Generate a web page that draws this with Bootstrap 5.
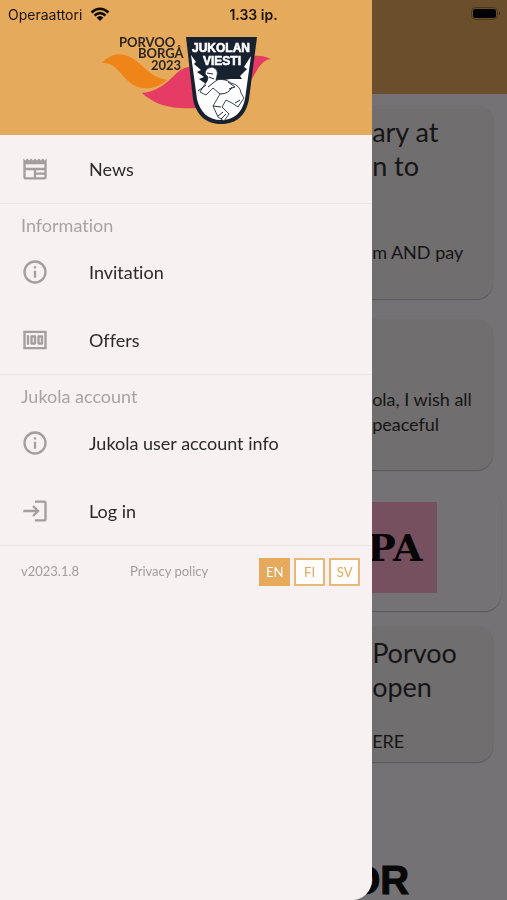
<!DOCTYPE html>
<html lang="en">
<head>
<meta charset="utf-8">
<meta name="viewport" content="width=device-width, initial-scale=1">
<title>Jukola</title>
<link href="https://cdn.jsdelivr.net/npm/bootstrap@5.3.0/dist/css/bootstrap.min.css" rel="stylesheet">
<style>
:root { --drawer: 73.4vw; --brand: #e5aa5b; }
body { font-family: Lato, "Open Sans", sans-serif; font-variant-ligatures: none; background: #747275; color: #161516; overflow: hidden; }
.screen { height: 100vh; overflow: hidden; }
.topbar { height: 94px; background: #6b4f2c; }
.statusbar { height: 28px; font-family: Inter, sans-serif; font-size: 14px; color: #1d1408; }
.clock { left: 50vw; transform: translateX(-50%); font-weight: 600; }
.feed { padding-top: 11px; gap: 20px; }
.post { background: #706e6e; border-radius: 16px; padding: 10px 16px 16px var(--drawer); margin-right: 14px; box-shadow: 0 1px 1px #5a585a; }
.post h2 { font-size: 27px; line-height: 34px; font-weight: 400; margin: 0; white-space: nowrap; }
.post p { font-size: 18px; line-height: 25px; margin: 0; white-space: nowrap; }
.post-tall { height: 194px; padding-bottom: 34px; }
.post-mid { height: 151px; padding-bottom: 33px; }
.post-low { height: 136px; padding-bottom: 8px; }
.ad { border-radius: 16px; height: 121px; margin-right: 6px; padding-left: calc(var(--drawer) - 5px); padding-top: 12px; box-shadow: 0 1px 1px #5a585a; }
.ad-art { width: 70px; height: 91px; background: #76505f; color: #080507; font: bold 38px "DejaVu Serif", serif; }
.ad + .post { margin-top: -5px; }
.sponsor { padding-left: calc(var(--drawer) - 23px); font: bold 40px/40px "Liberation Sans", Arial, sans-serif; -webkit-text-stroke: 1px #080808; color: #080808; }
.drawer.offcanvas { --bs-offcanvas-width: var(--drawer); --bs-offcanvas-bg: #f7f1f1; --bs-offcanvas-border-width: 0; border-bottom-right-radius: 20px; overflow: hidden; transition: none; }
.brandbar { background: var(--brand); height: 135px; }
.logo { width: 170px; height: 94px; }
.menu-item { height: 68px; padding: 0 21px; gap: 40px; font-size: 18px; color: #2b292a; text-decoration: none; }
.menu-item svg { width: 28px; height: 28px; fill: #a39f9f; flex: none; }
.menu-title { height: 34px; padding: 9px 21px 0; font-size: 18px; line-height: 24px; font-weight: 400; color: #a8a4a4; margin: 0; }
.menu-block { border-bottom: 1px solid #ebe6e6; }
.foot { padding: 12px 12px 0 21px; font-size: 13px; color: #a19d9d; }
.foot a { color: inherit; text-decoration: none; }
.lang { width: 31px; height: 28px; padding: 0; border: 2px solid #e8b878; border-radius: 0; background: #fffdfc; color: var(--brand); font-size: 13px; line-height: 20px; }
.lang.active { background: var(--brand); border-color: var(--brand); color: #fff; }
</style>
<script src="https://cdn.jsdelivr.net/npm/bootstrap@5.3.0/dist/js/bootstrap.bundle.min.js"></script>
</head>
<body>
<main class="screen d-flex flex-column">
  <header class="topbar flex-shrink-0 d-flex justify-content-end align-items-start">
    <svg class="mt-1 me-1" width="32" height="18" viewBox="0 0 32 18" role="img" aria-label="Battery">
      <rect x=".5" y="3.5" width="26" height="12" rx="4" fill="none" stroke="#49361e"/>
      <rect x="2" y="5" width="23" height="9" rx="2.500"/>
      <path d="M28 7.500q2 2 0 4z" fill="#35260f"/>
    </svg>
  </header>
  <div class="feed d-flex flex-column flex-grow-1">
    <article class="post post-tall d-flex flex-column justify-content-between">
      <h2>ary at<br>n to</h2>
      <p>m AND pay</p>
    </article>
    <article class="post post-mid d-flex flex-column justify-content-end">
      <p>ola, I wish all<br>peaceful</p>
    </article>
    <section class="ad"><div class="ad-art d-flex align-items-center">PA</div></section>
    <article class="post post-low d-flex flex-column justify-content-between">
      <h2>Porvoo<br>open</h2>
      <p>ERE</p>
    </article>
    <div class="sponsor mt-auto">OR</div>
  </div>
</main>

<aside class="drawer offcanvas offcanvas-start show" data-bs-backdrop="false" data-bs-scroll="true" tabindex="-1" aria-label="Menu">
  <header class="brandbar flex-shrink-0">
    <div class="statusbar d-flex align-items-center gap-1 ps-2">
      <span>Operaattori</span>
      <svg class="ms-1" width="20" height="15" viewBox="0 0 20 15" fill="none" stroke="#100b04" stroke-width="2.600" role="img" aria-label="Wi-Fi">
        <path d="M1.500 5.500Q10-2 18.500 5.500M4.500 8.500Q10 3.700 15.500 8.500"/>
        <path d="M6.500 10.500Q10 7.500 13.500 10.500L10 14z" fill="#100b04" stroke="none"/>
      </svg>
      <span class="clock position-absolute">1.33 ip.</span>
    </div>
    <svg class="logo d-block mx-auto mt-1" viewBox="101 32 170 94" role="img" aria-label="Porvoo Borgå 2023 Jukolan Viesti">
      <path d="M102 63C111 53 121 52 132 58C145 66 150 77 167 80C153 92 137 90 127 80C119 72 114 62 102 63Z" fill="#ef8519"/>
      <path d="M142 93C160 91 167 82 178 72C187 64 209 63 228 72C242 75 242 46 271 59C259 60 257 74 246 87C227 107 205 109 180 108C162 107 151 101 142 93Z" fill="#e63b64"/>
      <g fill="#2b2521" font-family="Lato, sans-serif" font-weight="700" font-size="13">
        <text x="119" y="47">PORVOO</text><text x="138" y="58">BORGÅ</text><text x="151" y="70">2023</text>
      </g>
      <path d="M186 37H257L249 99C246 115 237 124 221 124C205 124 196 114 193 99Z" fill="#18212f"/>
      <path d="M191 55L196 62L194 64L201 70L197 72L204 77L199 79L206 84L214 82L230 79H242L240 76L247 69L244 67L251 56L245 99C242 113 234 120 221 120C208 120 200 112 197 99Z" fill="#fff"/>
      <path d="M205 84Q208 81 208 77L205 74Q205 68 212 67Q219 69 217 76L216 80Q225 78 231 83Q240 85 241 93L244 98L238 107L232 103L226 100L222 107L229 114L224 121L218 117L213 106L220 94L213 88L206 95L200 92Z" fill="#fff" stroke="#26303c" stroke-width=".9"/>
      <path d="M207 73L213 74M209 77L214 79M217 80L208 87M220 94Q229 94 232 87M228 82L235 87L229 89M213 106L221 107M218 116L223 112M221 119L226 114M235 103L240 100M198 91L206 85" fill="none" stroke="#26303c"/>
      <g fill="#fff" stroke="#fff" stroke-width=".6" font-family="Liberation Sans, Arial, sans-serif" font-weight="700" font-size="12" text-anchor="middle">
        <text x="221" y="52">JUKOLAN</text><text x="222" y="65">VIESTI</text>
      </g>
    </svg>
  </header>
  <nav>
    <div class="menu-block">
      <a class="menu-item d-flex align-items-center" href="#news"><svg viewBox="0 0 24 24"><path fill-rule="evenodd" d="M20 11H4V8H20M20 15H13V13H20M20 19H13V17H20M11 19H4V13H11M20.330 4.670L18.670 3L17 4.670L15.330 3L13.670 4.670L12 3L10.330 4.670L8.670 3L7 4.670L5.330 3L3.670 4.670L2 3V19A2 2 0 0 0 4 21H20A2 2 0 0 0 22 19V3Z"/></svg>News</a>
    </div>
    <div class="menu-block">
      <h2 class="menu-title">Information</h2>
      <a class="menu-item d-flex align-items-center" href="#invitation"><svg viewBox="0 0 24 24"><path d="M11 7h2v2h-2zm0 4h2v6h-2zm1-9a10 10 0 1 0 0 20 10 10 0 0 0 0-20zm0 18a8 8 0 1 1 0-16 8 8 0 0 1 0 16z"/></svg>Invitation</a>
      <a class="menu-item d-flex align-items-center" href="#offers"><svg viewBox="0 0 24 24"><path d="M15 16h3c.55 0 1-.45 1-1V9c0-.55-.45-1-1-1h-3c-.55 0-1 .45-1 1v6c0 .55.45 1 1 1zm1-6h1v4h-1zm-7 6h3c.55 0 1-.45 1-1V9c0-.55-.45-1-1-1H9c-.55 0-1 .45-1 1v6c0 .55.45 1 1 1zm1-6h1v4h-1zM5 8h2v8H5zM2 4v16h20V4zm2 14V6h16v12z" fill-rule="evenodd"/></svg>Offers</a>
    </div>
    <div class="menu-block">
      <h2 class="menu-title">Jukola account</h2>
      <a class="menu-item d-flex align-items-center" href="#account"><svg viewBox="0 0 24 24"><path d="M11 7h2v2h-2zm0 4h2v6h-2zm1-9a10 10 0 1 0 0 20 10 10 0 0 0 0-20zm0 18a8 8 0 1 1 0-16 8 8 0 0 1 0 16z"/></svg>Jukola user account info</a>
      <a class="menu-item d-flex align-items-center" href="#login"><svg viewBox="0 0 24 24"><path d="M11 7L9.600 8.400l2.600 2.600H2v2h10.200l-2.600 2.600L11 17l5-5zm9 12h-8v2h8c1.100 0 2-.9 2-2V5c0-1.100-.9-2-2-2h-8v2h8z"/></svg>Log in</a>
    </div>
  </nav>
  <footer class="foot d-flex align-items-center justify-content-between">
    <span>v2023.1.8</span>
    <a href="#privacy">Privacy policy</a>
    <div class="d-flex gap-1">
      <button type="button" class="btn lang active">EN</button>
      <button type="button" class="btn lang">FI</button>
      <button type="button" class="btn lang">SV</button>
    </div>
  </footer>
</aside>
</body>
</html>
